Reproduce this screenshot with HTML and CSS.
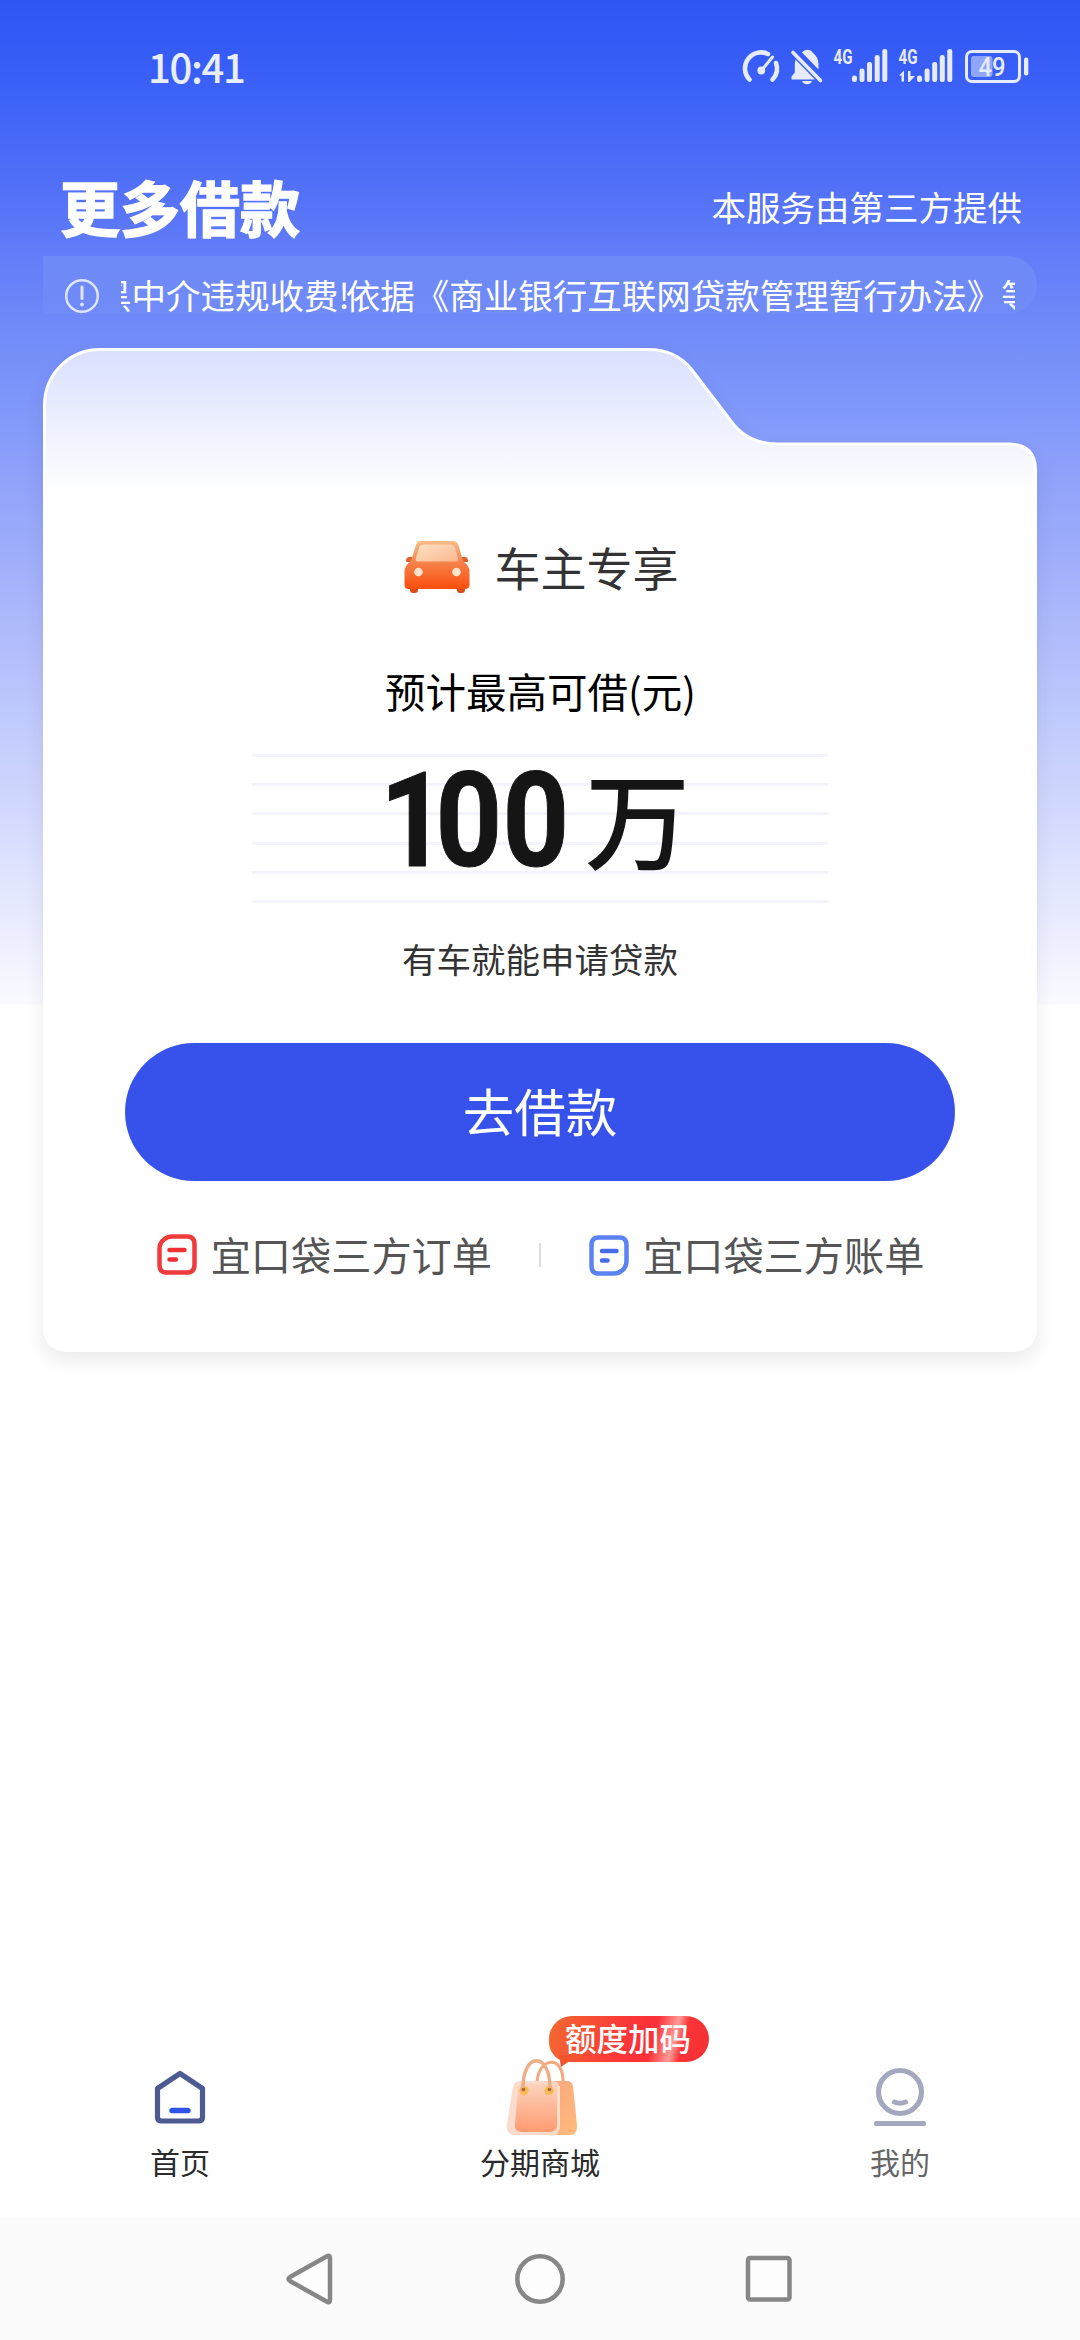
FILE: index.html
```html
<!DOCTYPE html>
<html lang="zh-CN">
<head>
<meta charset="utf-8">
<title>更多借款</title>
<link rel="stylesheet" href="styles.css">
</head>
<body>
<div class="screen">
  <header class="status">
    <span class="clock">10:41</span>
    <svg class="status-icons" viewBox="740 40 292 52" width="292" height="52">
      <g fill="none" stroke="#e6ebff" stroke-linecap="round" stroke-linejoin="round">
        <path d="M749.5 79.5A16 16 0 0 1 768 54" stroke-width="4.6"/>
        <path d="M776 63A16 16 0 0 1 772.5 79.5" stroke-width="4.6"/>
        <path d="M761.5 70.5L772.5 57" stroke-width="3"/>
      </g>
      <g fill="#e6ebff">
        <circle cx="761.3" cy="70.5" r="3.9"/>
        <path d="M802 52.5Q804 49.7 807 49.7Q811 49.7 813 53Q818.500 57 818.500 64.500V69.500Z"/>
        <path d="M795.500 59.500L815 79.500H791.500V76.500L794.800 72.500V64Z"/>
        <path d="M802 81H812Q810.500 84.300 807 84.300Q803.500 84.300 802 81Z"/>
        <path d="M793 52.500L820.500 80.500" stroke="#e6ebff" stroke-width="3.600" stroke-linecap="round"/>
        <text class="net" x="833.500" y="64" textLength="19" lengthAdjust="spacingAndGlyphs">4G</text>
        <rect x="852" y="75.500" width="5" height="6.500" rx="2.300"/>
        <rect x="859.500" y="68.500" width="5" height="13.500" rx="2.300"/>
        <rect x="867" y="62" width="5" height="20" rx="2.300"/>
        <rect x="874.700" y="55" width="5" height="27" rx="2.300"/>
        <rect x="882.300" y="49" width="5" height="33" rx="2.300"/>
        <text class="net" x="898.500" y="64" textLength="19" lengthAdjust="spacingAndGlyphs">4G</text>
        <path d="M899 75.500L904 70.500V81.500H901.500V75.500ZM908 71H910.500V76H915L909.500 82H908Z"/>
        <rect x="917" y="75.500" width="5" height="6.500" rx="2.300"/>
        <rect x="924.600" y="68.500" width="5" height="13.500" rx="2.300"/>
        <rect x="932.200" y="62" width="5" height="20" rx="2.300"/>
        <rect x="939.800" y="55" width="5" height="27" rx="2.300"/>
        <rect x="947.300" y="49" width="5" height="33" rx="2.300"/>
        <rect x="971" y="56" width="21.500" height="21" rx="3" opacity=".5"/>
        <rect x="1024" y="57.500" width="4.300" height="18" rx="2"/>
        <text class="level" x="978.500" y="75.500" textLength="27" lengthAdjust="spacingAndGlyphs">49</text>
      </g>
      <rect x="966.500" y="51.500" width="53" height="30" rx="5.500" fill="none" stroke="#e6ebff" stroke-width="3"/>
    </svg>
  </header>

  <div class="heading">
    <h1 class="title">更多借款</h1>
    <span class="provider">本服务由第三方提供</span>
  </div>

  <div class="notice">
    <svg class="notice-icon" viewBox="0 0 36 36" width="36" height="36">
      <circle cx="18" cy="18" r="15.800" fill="none" stroke="#dfe5ff" stroke-width="2.500"/>
      <path d="M18 9V20.500" stroke="#dfe5ff" stroke-width="3" stroke-linecap="round"/>
      <circle cx="18" cy="26.500" r="1.900" fill="#dfe5ff"/>
    </svg>
    <div class="marquee"><span class="marquee-text">黑中介违规收费<span class="bang">!</span>依据《商业银行互联网贷款管理暂行办法》等</span></div>
  </div>

  <main class="card">
    <svg class="card-shape" viewBox="0 0 994 1004" width="994" height="1004">
      <defs>
        <linearGradient id="cardFill" gradientUnits="userSpaceOnUse" x1="0" y1="0" x2="0" y2="145">
          <stop offset="0" stop-color="#d9dfff"/>
          <stop offset="1" stop-color="#fff"/>
        </linearGradient>
      </defs>
      <path d="M1.500 57A55.500 55.500 0 0 1 57 1.500H605C624 1.500 639 9 649 22L691 77C701 89 715 96 735 96H967Q992.500 97 992.500 122V978Q992.500 1002.500 968 1002.500H26Q1.500 1002.500 1.500 978Z" fill="url(#cardFill)" stroke="#fff" stroke-width="3"/>
    </svg>
    <div class="card-body">
      <div class="owner">
        <svg class="car" viewBox="0 0 68 56" width="68" height="56">
          <defs>
            <linearGradient id="carBody" x1="0" y1="0" x2="0" y2="1">
              <stop offset="0" stop-color="#f9bd8a"/><stop offset=".45" stop-color="#f5824a"/><stop offset="1" stop-color="#fb4e0c"/>
            </linearGradient>
            <linearGradient id="carGlass" x1="0" y1="0" x2="1" y2="1">
              <stop offset="0" stop-color="#fde2c6"/><stop offset="1" stop-color="#fbb78d"/>
            </linearGradient>
          </defs>
          <rect x="7" y="44" width="8" height="9" rx="3" fill="#d94d18"/>
          <rect x="54" y="44" width="8" height="9" rx="3" fill="#d94d18"/>
          <path d="M3 20Q4 16 9 17L12 22H5Q2 22 3 20ZM65 20Q64 16 59 17L56 22H63Q66 22 65 20Z" fill="#dd6230"/>
          <path d="M13 5Q14 1 18 1H50Q54 1 55.500 5L60 21Q66.500 26 66.500 31V45Q66.500 49 62 49H6Q1.500 49 1.500 45V31Q1.500 26 8 21Z" fill="url(#carBody)"/>
          <path d="M16 8Q17 4.500 21 4.500H47Q51 4.500 52 8L55 18Q56 21.500 52 21.500H15Q12 21.500 13 18Z" fill="url(#carGlass)"/>
          <circle cx="15.500" cy="32" r="4.300" fill="#ffe3cb"/>
          <circle cx="53.500" cy="32" r="4.300" fill="#ffe3cb"/>
        </svg>
        <span class="owner-text">车主专享</span>
      </div>
      <p class="estimate">预计最高可借(元)</p>
      <div class="amount">
        <svg class="digits" viewBox="0 0 190 100" width="190" height="100"><text transform="scale(.88 1)" x="0 63.100 139.200" y="97">100</text></svg>
        <span class="unit">万</span>
      </div>
      <p class="hint">有车就能申请贷款</p>
      <button class="borrow">去借款</button>
      <div class="links">
        <a class="link">
          <svg viewBox="0 0 42 44" width="42" height="44" fill="none" stroke-linecap="round">
            <path d="M16 3.500H31Q38.500 3.500 38.500 11V32Q38.500 39.500 31 39.500H10.500Q3.500 39.500 3.500 32V16Q3.500 10 8 6.500Q11.500 3.500 16 3.500Z" stroke="#f03a3c" stroke-width="4.500"/>
            <path d="M13.500 17H28.500M13.500 26.500H20" stroke="#ee2f34" stroke-width="4.500"/>
          </svg>
          <span>宜口袋三方订单</span>
        </a>
        <i class="divider"></i>
        <a class="link">
          <svg viewBox="0 0 42 44" width="42" height="44" fill="none" stroke-linecap="round">
            <path d="M10.500 4.500H31.500Q38.500 4.500 38.500 12V28Q38.500 34 34 37.500Q30.500 40.500 26 40.500H10.500Q3.500 40.500 3.500 33V12Q3.500 4.500 10.500 4.500Z" stroke="#5b82f3" stroke-width="4.500"/>
            <path d="M14 18H28.500M14 27.500H19.500" stroke="#456ce9" stroke-width="4.500"/>
          </svg>
          <span>宜口袋三方账单</span>
        </a>
      </div>
    </div>
  </main>

  <nav class="tabs">
    <div class="tab">
      <svg viewBox="0 0 60 80" width="60" height="80" fill="none" stroke-linejoin="round" stroke-linecap="round">
        <path d="M30 14.500L52.500 29.500V58Q52.500 62 48.500 62H11.500Q7.500 62 7.500 58V29.500Z" stroke="#4c5b92" stroke-width="5.200"/>
        <path d="M22 51.500H38" stroke="#3154e8" stroke-width="5.400"/>
      </svg>
      <span>首页</span>
    </div>
    <div class="tab">
      <svg viewBox="0 0 80 80" width="80" height="80">
        <defs>
          <linearGradient id="bagFront" x1="0" y1="0" x2="0" y2="1"><stop offset="0" stop-color="#fcd3bd"/><stop offset="1" stop-color="#ff9b70"/></linearGradient>
          <linearGradient id="bagBack" x1="0" y1="0" x2="1" y2="1"><stop offset="0" stop-color="#fca381"/><stop offset="1" stop-color="#fdbc79"/></linearGradient>
        </defs>
        <path d="M41 22H67Q72 22 73 27L77 66Q78 76 69 76H41Z" fill="url(#bagBack)"/>
        <path d="M37 24C38 -2 64 -5 63 24" fill="none" stroke="#f3a980" stroke-width="3"/>
        <path d="M20 22H53Q59 22 59.500 29V67Q59.500 76 50 76H16Q5 76 7 65L13 28Q14 22 20 22Z" fill="#fbd9ca" opacity=".95"/>
        <path d="M22 25H52Q57 25 57 30V66Q57 73 49 73H22Q14 73 15 65L18 30Q18 25 22 25Z" fill="url(#bagFront)"/>
        <path d="M59 27V67Q59 76 50 76" fill="none" stroke="#ffe0c9" stroke-width="2"/>
        <circle cx="24" cy="31.500" r="4.500" fill="#f6ba50"/><circle cx="49" cy="31.500" r="4.500" fill="#f6ba50"/>
        <path d="M23 31C22 -8 51 -8 50 31" fill="none" stroke="#eeae83" stroke-width="3.400" stroke-linecap="round"/>
        <circle cx="23.500" cy="30.500" r="1.800" fill="#a96431"/><circle cx="49.500" cy="30.500" r="1.800" fill="#a96431"/>
      </svg>
      <span>分期商城</span>
      <b class="badge">额度加码</b>
    </div>
    <div class="tab tab-muted">
      <svg viewBox="0 0 60 80" width="60" height="80" fill="none" stroke="#a4a8bf" stroke-linecap="round">
        <circle cx="30" cy="33" r="21.500" stroke-width="5.200"/>
        <path d="M24.500 43Q30 45.500 35.500 43" stroke-width="5"/>
        <path d="M6.500 64.500H53.500" stroke-width="5.200"/>
      </svg>
      <span>我的</span>
    </div>
  </nav>

  <footer class="sysnav">
    <svg viewBox="0 0 52 52" width="52" height="52"><path d="M41.500 3.500Q45 1.500 45 5V47Q45 50.500 41.500 48.500L5 28Q2 26 5 24Z"/></svg>
    <svg viewBox="0 0 52 52" width="52" height="52"><circle cx="26" cy="26" r="22.700"/></svg>
    <svg viewBox="0 0 52 52" width="52" height="52"><rect x="5" y="5" width="41.500" height="41.500" rx="2"/></svg>
  </footer>
</div>
</body>
</html>
```
FILE: styles.css
```css
* { box-sizing: border-box; }
body { margin: 0; background: #fff; font-family: "Noto Sans CJK SC", "Noto Sans", sans-serif; }
p, h1 { margin: 0; }
.screen {
  width: 1080px; height: 2340px; overflow: hidden;
  display: flex; flex-direction: column;
  background: linear-gradient(180deg, #2e54f4 0, #3d62f8 95px, #4c6cf7 160px, #5e7af8 240px, #6f89f8 320px, #8098fa 410px, #94a5fa 500px, #b0bcfb 640px, #d0d7fd 800px, #fafaff 1004px, #fff 1005px);
}
.status { height: 140px; padding: 40px 48px 0 148px; display: flex; justify-content: space-between; align-items: flex-start; flex: none; }
.clock { font-size: 40px; line-height: 52px; font-weight: 500; color: #e9eeff; letter-spacing: -1.300px; }
.net { font: 700 21px Roboto, sans-serif; }
.level { font: 500 25px Roboto, sans-serif; }
.heading { height: 116px; padding: 19px 58px 0 60px; display: flex; justify-content: space-between; align-items: flex-start; flex: none; color: #fff; }
.title { font-size: 60px; line-height: 94px; font-weight: 700; -webkit-text-stroke: 1.500px #fff; stroke-linejoin: round; }
.provider { font-size: 34.500px; line-height: 95px; }
.notice { height: 58px; margin: 0 43px 34px; padding: 0 22px 0 21px; display: flex; align-items: flex-start; flex: none; border-radius: 0 29px 29px 0; background: linear-gradient(180deg, rgba(135, 165, 245, .34), rgba(135, 165, 245, .12)); color: #fff; }
.notice-icon { margin: 22px 21px 0 0; flex: none; }
.marquee { flex: 1; height: 58px; overflow: hidden; display: flex; }
.marquee-text { font-size: 34.500px; line-height: 76px; white-space: nowrap; margin-left: -24px; }
.bang { letter-spacing: -4px; }
.card { height: 1004px; margin: 0 43px; flex: none; display: grid; }
.card-shape, .card-body { grid-area: 1 / 1; }
.card-shape { overflow: visible; filter: drop-shadow(0 9px 9px rgba(0, 0, 0, .08)); }
.card-body { display: flex; flex-direction: column; align-items: center; position: relative; }
.owner { display: flex; align-items: center; gap: 24px; height: 60px; margin-top: 190px; padding-left: 1px; }
.owner-text { font-size: 46px; line-height: 60px; color: #333; padding-bottom: 5px; }
.estimate { font-size: 40.500px; line-height: 60px; margin-top: 63px; padding-left: 1px; color: #000; }
.amount { width: 576px; height: 149px; margin-top: 33px; display: flex; padding-left: 128px; background: repeating-linear-gradient(180deg, #f3f3fb 0 3px, transparent 3px 29.200px); color: #151515; }
.digits { margin-top: 15px; flex: none; overflow: visible; }
.digits text { font: 700 132px Roboto, sans-serif; fill: #151515; stroke: #151515; stroke-width: 1px; }
.unit { font-size: 105px; line-height: 150px; font-weight: 500; margin-left: 15px; margin-top: -14px; }
.hint { font-size: 34.500px; line-height: 50px; margin-top: 30px; color: #333; }
.borrow { width: 830px; height: 138px; margin-top: 60px; border: 0; border-radius: 69px; background: #3652eb; color: #fff; font: 400 51.500px/132px "Noto Sans CJK SC", sans-serif; padding: 0 0 5px; }
.links { display: flex; align-items: center; margin-top: 41px; height: 66px; }
.link { display: flex; align-items: center; gap: 13px; font-size: 40.200px; line-height: 66px; color: #555; }
.link span { margin-top: -2px; }
.divider { width: 2px; height: 24px; margin: 0 47px; background: #ddd; }
.tabs { margin-top: auto; height: 218px; padding-top: 59px; display: grid; grid-template-columns: repeat(3, 1fr); flex: none; }
.tab { display: flex; flex-direction: column; align-items: center; position: relative; font-size: 30px; line-height: 44px; color: #2b2b2b; }
.tab-muted { color: #666; }
.badge { position: absolute; left: 189px; top: -43px; width: 160px; height: 46px; border-radius: 23px 23px 23px 20px; background: linear-gradient(105deg, #f36a30 0, #fb3838 45%, #fb2f38 64%, #ff9c96 76%, #fb343a 82%, #f23030 100%); color: #fff; font-size: 31.500px; line-height: 42px; font-weight: 500; text-align: center; padding-right: 2px; }
.badge::after { content: ""; position: absolute; left: 10px; top: 39px; border-left: 2px solid transparent; border-right: 17px solid transparent; border-top: 12px solid #f2542f; }
.sysnav { height: 122px; flex: none; background: #fbfbfb; display: flex; justify-content: center; align-items: center; gap: 177px; }
.sysnav svg { fill: #fdfdfd; stroke: #878787; stroke-width: 4.500; stroke-linejoin: round; }
```
